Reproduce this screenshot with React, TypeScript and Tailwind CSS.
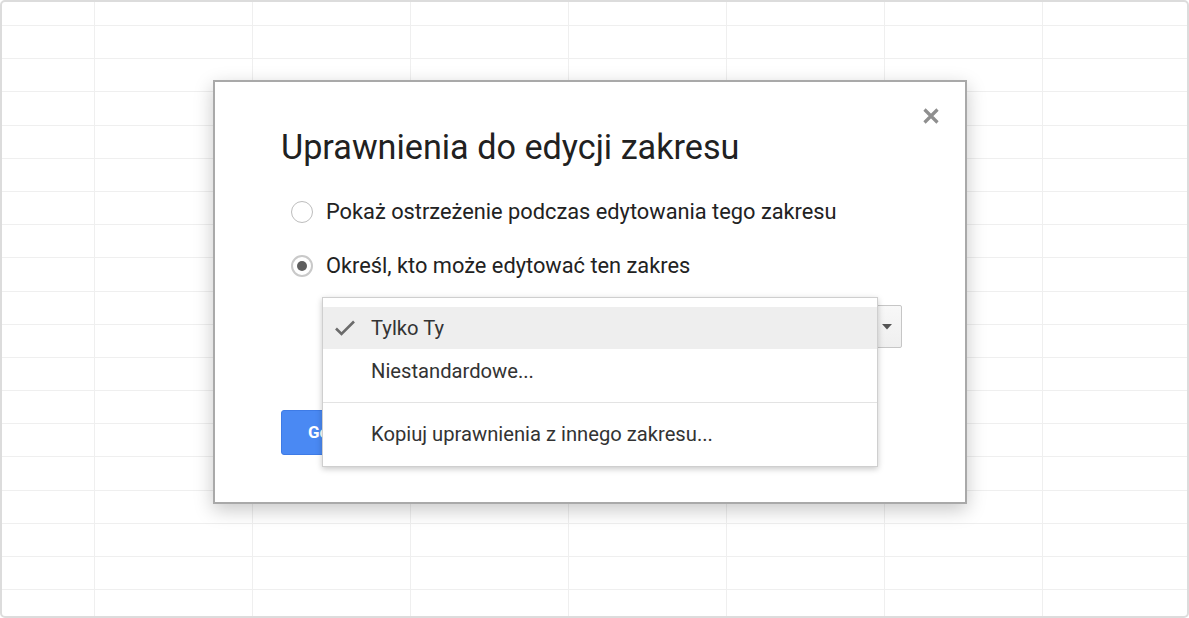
import React from 'react';

const font = { fontFamily: 'Roboto, "Liberation Sans", sans-serif' };

function SheetGrid() {
  const rows = Array.from({ length: 19 });
  const cols = Array.from({ length: 7 });
  return (
    <div className="flex flex-col">
      {rows.map((_, r) => (
        <div
          key={r}
          className={`flex border-b border-[#efefef] ${r === 0 ? 'h-[24px]' : 'h-[33.2px]'}`}
        >
          <div className="w-[93px] shrink-0 border-r border-[#efefef]" />
          {cols.map((_, c) => (
            <div key={c} className="w-[158px] shrink-0 border-r border-[#efefef]" />
          ))}
          <div className="flex-1" />
        </div>
      ))}
    </div>
  );
}

function Radio({ checked, label }: { checked?: boolean; label: string }) {
  return (
    <label className="flex items-center h-[30px]">
      <span
        className={`w-[22px] h-[22px] shrink-0 rounded-full flex items-center justify-center bg-white ${
          checked ? 'border-2 border-[#c9c9c9]' : 'border border-[#bdbdbd]'
        }`}
      >
        {checked && <span className="w-[10px] h-[10px] rounded-full bg-[#5f5f5f]" />}
      </span>
      <span className="ml-[13px] text-[21.8px] text-[#222] whitespace-nowrap">{label}</span>
    </label>
  );
}

function Dialog() {
  return (
    <div className="absolute left-[211px] top-[78px] w-[754px] h-[424px] bg-white border-2 border-[#a9a9a9] shadow-[0_6px_18px_rgba(0,0,0,0.22)]">
      <button className="absolute right-[25px] top-[25px] w-[18px] h-[18px] flex items-center justify-center">
        <svg width="18" height="18" viewBox="0 0 18 18">
          <path d="M2.5 2.5 L15.5 15.5 M15.5 2.5 L2.5 15.5" stroke="#8f8f8f" strokeWidth="3.2" strokeLinecap="butt" />
        </svg>
      </button>

      <div className="pl-[66px] pt-[45px]">
        <h1 className="text-[34.2px] leading-[40px] text-[#212121] whitespace-nowrap">Uprawnienia do edycji zakresu</h1>

        <div className="mt-[30px] flex flex-col gap-[24px] pl-[10px]">
          <Radio label="Pokaż ostrzeżenie podczas edytowania tego zakresu" />
          <Radio checked label="Określ, kto może edytować ten zakres" />
        </div>

        <div className="mt-[24px] ml-[41px] w-[580px] h-[43px] rounded-[2px] border border-[#c6c6c6] bg-gradient-to-b from-[#f8f8f8] to-[#efefef] flex items-center justify-end pr-[9px]">
          <svg width="10" height="6" viewBox="0 0 10 6">
            <path d="M0 0 L10 0 L5 5.5 Z" fill="#555" />
          </svg>
        </div>

        <div className="mt-[62px]">
          <button className="h-[45px] px-[26px] rounded-[3px] bg-[#4a89f3] border border-[#3e7be6] text-white text-[17px] font-bold">
            Gotowe
          </button>
        </div>
      </div>

      <Menu />
    </div>
  );
}

function Menu() {
  return (
    <div className="absolute left-[107px] top-[215px] w-[556px] h-[170px] bg-white border border-[#cfcfcf] shadow-[0_2px_6px_rgba(0,0,0,0.22)] pt-[9px] text-[20.2px] text-[#333]">
      <div className="h-[42px] bg-[#eeeeee] flex items-center">
        <span className="w-[48px] flex justify-center pr-[4px]">
          <svg width="22" height="18" viewBox="0 0 22 18">
            <path d="M2 9.5 L7.5 15 L20 2.5" stroke="#6b6b6b" strokeWidth="2.6" fill="none" />
          </svg>
        </span>
        <span>Tylko Ty</span>
      </div>
      <div className="h-[44px] flex items-center pl-[48px]">Niestandardowe...</div>
      <div className="py-[9px]">
        <div className="h-px bg-[#e3e3e3]" />
      </div>
      <div className="h-[44px] flex items-center pl-[48px]">Kopiuj uprawnienia z innego zakresu...</div>
    </div>
  );
}

export default function App() {
  return (
    <div style={font} className="w-[1189px] h-[618px] bg-white">
      <div className="relative w-[1189px] h-[618px] border-2 border-[#dcdcdc] rounded-[5px] overflow-hidden bg-white">
        <SheetGrid />
        <Dialog />
      </div>
    </div>
  );
}
